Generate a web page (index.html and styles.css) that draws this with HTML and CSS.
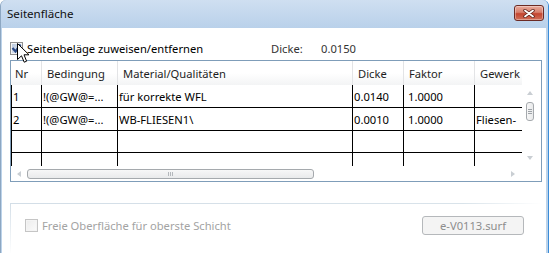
FILE: index.html
```html
<!DOCTYPE html>
<html lang="de">
  <head>
    <meta charset="UTF-8" />
    <title>Seitenfläche</title>
    <link rel="stylesheet" href="styles.css">
  </head>
  <body>
    <div class="window">
      <div class="titlebar">
        <span class="title">Seitenfläche</span>
        <button class="close" title="Schließen">
          <svg width="12" height="9" viewBox="0 0 12 9">
            <path d="M2 1.5 L10 7.5 M10 1.5 L2 7.5" stroke="#5a1f17" stroke-width="3.4" stroke-linecap="round" />
            <path d="M2 1.5 L10 7.5 M10 1.5 L2 7.5" stroke="#fff" stroke-width="1.8" stroke-linecap="round" />
          </svg>
        </button>
      </div>

      <div class="client">
        <div class="toprow">
          <span class="check checked">
            <svg width="11" height="11" viewBox="0 0 11 11">
              <path d="M1.5 5 L4.5 8.5 L9.5 1.5" fill="none" stroke="#2b4a86" stroke-width="2.2" />
            </svg>
          </span>
          <span class="toplabel">Seitenbeläge zuweisen/entfernen</span>
          <span class="dicke-label">Dicke:</span>
          <span class="dicke-value">0.0150</span>
        </div>

        <div class="grid">
          <div class="view">
            <table class="rows">
              <thead>
                <tr>
                  <th class="c-nr">Nr</th>
                  <th class="c-bed">Bedingung</th>
                  <th class="c-mat">Material/Qualitäten</th>
                  <th class="c-dicke">Dicke</th>
                  <th class="c-faktor">Faktor</th>
                  <th class="c-gewerk">Gewerk</th>
                </tr>
              </thead>
              <tbody>
                <tr>
                  <td>1</td>
                  <td>!(@GW@=...</td>
                  <td>für korrekte WFL</td>
                  <td>0.0140</td>
                  <td class="num">1.0000</td>
                  <td></td>
                </tr>
                <tr>
                  <td>2</td>
                  <td>!(@GW@=...</td>
                  <td>WB-FLIESEN1\</td>
                  <td>0.0010</td>
                  <td class="num">1.0000</td>
                  <td>Fliesen-</td>
                </tr>
                <tr class="empty">
                  <td></td><td></td><td></td><td></td><td></td><td></td>
                </tr>
                <tr class="empty">
                  <td></td><td></td><td></td><td></td><td></td><td></td>
                </tr>
              </tbody>
            </table>
          </div>
          <div class="vscroll">
            <span class="arrow up"></span>
            <span class="vthumb"><i></i><i></i><i></i></span>
            <span class="arrow down"></span>
          </div>
          <div class="hscroll">
            <span class="arrow left"></span>
            <span class="hthumb"><i></i><i></i><i></i></span>
            <span class="arrow right"></span>
          </div>
          <div class="corner"></div>
        </div>

        <div class="groupbox">
          <span class="check disabled"></span>
          <span class="grouplabel">Freie Oberfläche für oberste Schicht</span>
          <button class="surf" disabled>e-V0113.surf</button>
        </div>
      </div>

      <!-- mouse pointer over the checkbox -->
      <svg class="cursor" width="13" height="21" viewBox="0 0 13 21">
        <path d="M0.5 0.5 L0.5 16.5 L4.5 12.8 L7.2 19.2 L9.6 18.2 L7 11.8 L12 11.8 Z" fill="#fff" stroke="#000" stroke-width="1" stroke-linejoin="miter" />
      </svg>
    </div>
  </body>
</html>
```

FILE: styles.css
```css
body {
  margin: 0;
  width: 549px;
  height: 253px;
  overflow: hidden;
  font-family: "Segoe UI", "Noto Sans", sans-serif;
  font-size: 11.2px;
  color: #000;
  background-color: #fff;
}

.window {
  position: relative;
  height: 253px;
  box-sizing: border-box;
  background-color: #bcd3ea;
  border-left: 1px solid #8da7c2;
  border-right: 1px solid #3a8cd8;
  border-radius: 6px 6px 0 0;
}

.titlebar {
  height: 28px;
  display: flex;
  align-items: flex-start;
  padding: 0 4px 0 6px;
  background: linear-gradient(#cfdff1, #b9d1ea);
  border-radius: 6px 6px 0 0;
}

.title {
  flex: 1;
  line-height: 28px;
  font-size: 11.6px;
  color: #111;
}

.close {
  width: 30px;
  height: 16px;
  margin-top: 5px;
  padding: 0;
  display: flex;
  align-items: center;
  justify-content: center;
  border: 1px solid #6b2a24;
  border-radius: 3px;
  background: linear-gradient(#e9aa9c, #d7806d 45%, #c4452f 55%, #d0705a);
  box-shadow: inset 0 0 0 1px rgba(255, 255, 255, 0.35);
}

.client {
  height: 225px;
  margin: 0 2px 0 1px;
  background-color: #fff;
}

/* checkboxes */
.check {
  width: 13px;
  height: 13px;
  box-sizing: border-box;
  display: flex;
  align-items: center;
  justify-content: center;
  border: 1px solid #8f8f8f;
  background: linear-gradient(135deg, #dcdcdc, #fdfdfd);
  box-shadow: inset 0 0 0 1px #f4f4f4;
}

.check.checked {
  background: linear-gradient(135deg, #b7c6dc, #e9eef6);
}

.check.disabled {
  border-color: #c5c5c5;
  background: linear-gradient(135deg, #ececec, #fbfbfb);
}

.toprow {
  display: grid;
  grid-template-columns: 13px 244px 42px auto;
  column-gap: 4px;
  align-items: center;
  height: 13px;
  padding: 13px 0 0 8px;
}

.toprow .dicke-label,
.toprow .dicke-value {
  color: #333;
}

.toprow .dicke-label {
  margin-left: -4px;
}

/* data grid */
.grid {
  width: 532px;
  height: 122px;
  box-sizing: border-box;
  margin: 6px 0 0 8px;
  border: 1px solid #7f9db9;
  display: grid;
  grid-template-columns: 511px 19px;
  grid-template-rows: 105px 15px;
}

.view {
  overflow: hidden;
}

.rows {
  border-spacing: 0;
  table-layout: fixed;
  width: 554px;
}

.rows th,
.rows td {
  box-sizing: border-box;
  text-align: left;
  white-space: nowrap;
  overflow: hidden;
}

.rows th {
  height: 24px;
  padding: 0 0 0 5px;
  font-weight: normal;
  color: #1e1e1e;
  background: linear-gradient(#fff, #fff 50%, #f3f4f5);
  border-right: 1px solid #e3e4e6;
}

.rows th:first-child {
  padding-left: 3px;
  border-left: 1px solid transparent;
}

.rows td {
  height: 23px;
  padding: 0 0 0 1px;
  border-right: 1px solid #000;
  border-bottom: 1px solid #000;
}

.rows td.num {
  padding-left: 4px;
}

.rows td:first-child {
  border-left: 1px solid #000;
}

.rows tr.empty td {
  height: 22px;
}

.c-nr { width: 31px; }
.c-bed { width: 76px; }
.c-mat { width: 235px; }
.c-dicke { width: 51px; }
.c-faktor { width: 71px; }
.c-gewerk { width: 90px; }

/* scrollbars */
.arrow {
  width: 0;
  height: 0;
  border: 4px solid transparent;
}

.arrow.up {
  border-top: none;
  border-bottom-color: #c9ced3;
  border-left-width: 3px;
  border-right-width: 3px;
}

.arrow.down {
  border-bottom: none;
  border-top-color: #c9ced3;
  border-left-width: 3px;
  border-right-width: 3px;
}

.arrow.left {
  border-left: none;
  border-right-color: #c9ced3;
  border-top-width: 3px;
  border-bottom-width: 3px;
}

.arrow.right {
  border-right: none;
  border-left-color: #c9ced3;
  border-top-width: 3px;
  border-bottom-width: 3px;
}

.vscroll {
  display: flex;
  flex-direction: column;
  padding: 30px 0 6px 4px;
}

.vscroll .arrow.up {
  margin-left: 1px;
}

.vscroll .arrow.down {
  margin: auto 0 0 1px;
}

.vthumb {
  width: 8px;
  height: 19px;
  box-sizing: border-box;
  margin-top: 7px;
  display: flex;
  flex-direction: column;
  align-items: center;
  justify-content: center;
  gap: 1px;
  border: 1px solid #a5a9ad;
  border-radius: 3px;
  background: linear-gradient(to right, #f7f7f7, #e9eaeb);
}

.vthumb i {
  width: 4px;
  height: 1px;
  background-color: #9ea3a8;
}

.hscroll {
  display: flex;
  align-items: center;
  padding: 0 7px 0 6px;
}

.hthumb {
  width: 287px;
  height: 10px;
  box-sizing: border-box;
  margin-left: 6px;
  display: flex;
  align-items: center;
  justify-content: center;
  gap: 1px;
  border: 1px solid #a5a9ad;
  border-radius: 3px;
  background: linear-gradient(#f7f7f7, #e9eaeb);
}

.hthumb i {
  width: 1px;
  height: 4px;
  background-color: #b4b8bc;
}

.hscroll .arrow.right {
  margin-left: auto;
}

/* group box */
.groupbox {
  width: 532px;
  box-sizing: border-box;
  margin: 21px 0 0 8px;
  padding: 13px 18px 20px 15px;
  display: flex;
  align-items: center;
  background:
    linear-gradient(to right, #d3dee7, #d9e3ea 85%, rgba(255, 255, 255, 0)) top left / 100% 1px no-repeat,
    linear-gradient(#d3dee7, rgba(255, 255, 255, 0)) top left / 1px 100% no-repeat;
}

.grouplabel {
  margin-left: 4px;
  color: #a3a3a3;
}

.surf {
  width: 102px;
  height: 19px;
  margin-left: auto;
  padding: 0;
  font-family: inherit;
  font-size: 11.2px;
  color: #8d8d8d;
  border: 1px solid #b5b8bb;
  border-radius: 3px;
  background-color: #f4f4f4;
}

.cursor {
  position: absolute;
  left: 16px;
  top: 43px;
}
```
